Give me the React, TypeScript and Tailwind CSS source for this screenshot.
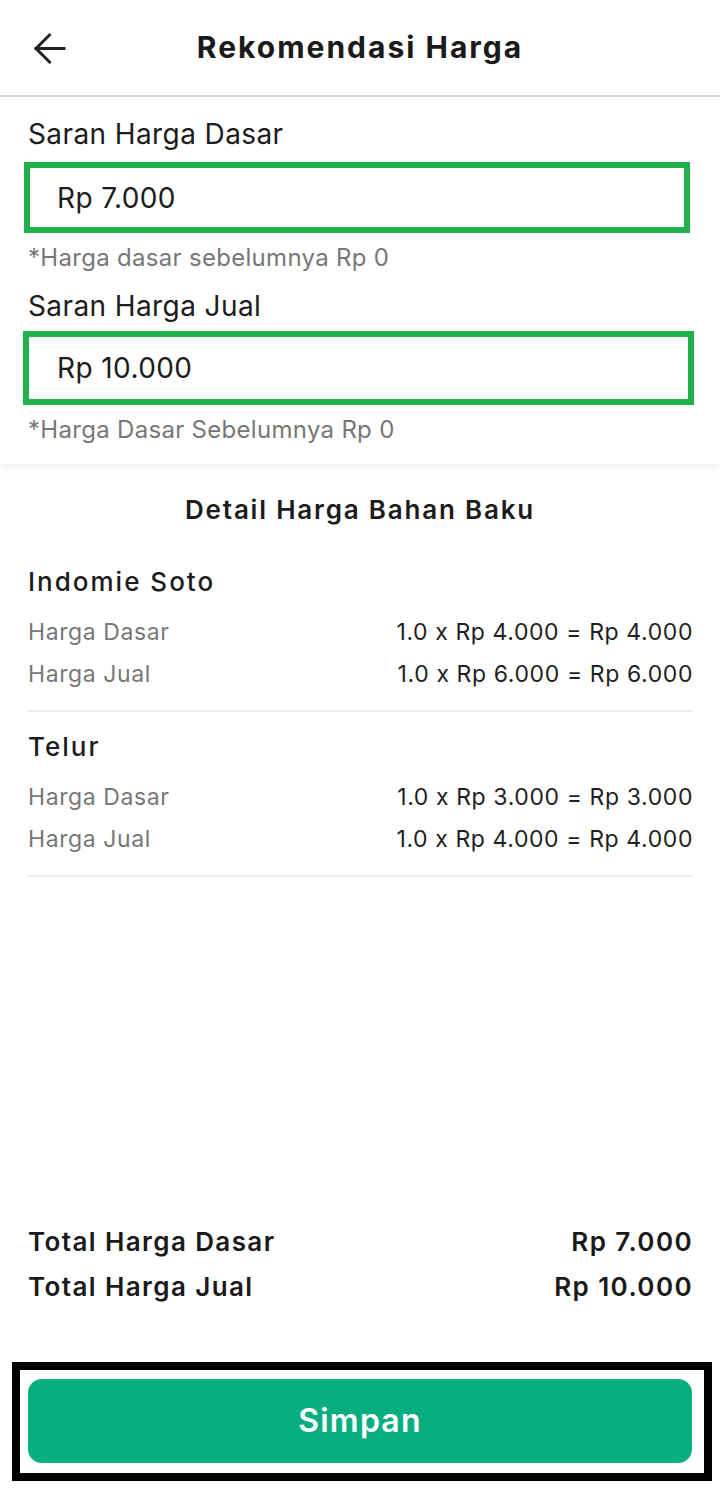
import React from "react";

const font = { fontFamily: 'Inter, "Noto Sans", sans-serif' };

const Row = ({ label, value }: { label: string; value: string }) => (
  <div className="flex justify-between leading-[42px] text-[23px] tracking-[0.6px]">
    <span className="text-[#777777]">{label}</span>
    <span className="text-[#1f1f1f] -mr-[1px]">{value}</span>
  </div>
);

const Item = ({ name, dasar, jual }: { name: string; dasar: string; jual: string }) => (
  <div>
    <div className="leading-[36px] text-[26px] tracking-[2px] font-medium text-[#1c1c1c]">{name}</div>
    <div className="mt-[11px]">
      <Row label="Harga Dasar" value={dasar} />
      <Row label="Harga Jual" value={jual} />
    </div>
    <div className="mt-[15px] h-[2px] bg-[#ececec]" />
  </div>
);

export default function App() {
  return (
    <div className="w-[720px] h-[1503px] bg-white flex flex-col" style={font}>
      {/* Header */}
      <div className="h-[97px] shrink-0 border-b-2 border-[#d4d4d4] flex items-center relative">
        <svg className="absolute left-[33px] top-[32px]" width="33" height="33" viewBox="0 0 33 33">
          <path d="M31 16.5H3M16.5 3L3 16.5L16.5 30" fill="none" stroke="#222" strokeWidth="3" strokeLinecap="square" />
        </svg>
        <div className="w-full text-center text-[30px] tracking-[2px] font-bold text-[#1a1a1a]">Rekomendasi Harga</div>
      </div>

      {/* Saran card */}
      <div className="shrink-0 pt-[19px] pb-[19px] shadow-[0_5px_8px_rgba(0,0,0,0.05)]">
        <div className="pl-[28px] leading-[36px] text-[28px] tracking-[0.4px] text-[#1c1c1c]">Saran Harga Dasar</div>
        <div className="mt-[10px] ml-[24px] w-[666px] h-[71px] border-[6px] border-[#23b04c] flex items-center pl-[27px] text-[28px] tracking-[0.4px] text-[#1c1c1c]">
          Rp 7.000
        </div>
        <div className="mt-[10px] pl-[28px] leading-[30px] text-[24px] tracking-[0.3px] text-[#777777]">*Harga dasar sebelumnya Rp 0</div>
        <div className="mt-[15px] pl-[28px] leading-[36px] text-[28px] tracking-[0.4px] text-[#1c1c1c]">Saran Harga Jual</div>
        <div className="mt-[7px] ml-[23px] w-[671px] h-[74px] border-[6px] border-[#23b04c] flex items-center pl-[28px] text-[28px] tracking-[0.4px] text-[#1c1c1c]">
          Rp 10.000
        </div>
        <div className="mt-[10px] pl-[28px] leading-[30px] text-[24px] tracking-[0.3px] text-[#777777]">*Harga Dasar Sebelumnya Rp 0</div>
      </div>

      {/* Detail */}
      <div className="mt-[28px] text-center leading-[36px] text-[26px] tracking-[1.8px] font-semibold text-[#1c1c1c]">
        Detail Harga Bahan Baku
      </div>
      <div className="px-[28px] mt-[36px] flex flex-col gap-[17px]">
        <Item name="Indomie Soto" dasar="1.0 x Rp 4.000 = Rp 4.000" jual="1.0 x Rp 6.000 = Rp 6.000" />
        <Item name="Telur" dasar="1.0 x Rp 3.000 = Rp 3.000" jual="1.0 x Rp 4.000 = Rp 4.000" />
      </div>

      {/* Totals */}
      <div className="mt-auto px-[28px] text-[26px] tracking-[1.4px] font-semibold text-[#1a1a1a]">
        <div className="flex justify-between leading-[45px]">
          <span>Total Harga Dasar</span>
          <span className="-mr-[1px]">Rp 7.000</span>
        </div>
        <div className="flex justify-between leading-[45px]">
          <span>Total Harga Jual</span>
          <span className="-mr-[1px]">Rp 10.000</span>
        </div>
      </div>

      {/* Button */}
      <div className="mt-[53px] mb-[22px] ml-[12px] w-[700px] h-[119px] border-[8px] border-black pl-[8px] pr-[12px] pt-[9px] pb-[10px]">
        <button className="w-full h-full rounded-[14px] bg-[#08ad80] text-white text-[32px] tracking-[1.2px] font-semibold">
          Simpan
        </button>
      </div>
    </div>
  );
}
